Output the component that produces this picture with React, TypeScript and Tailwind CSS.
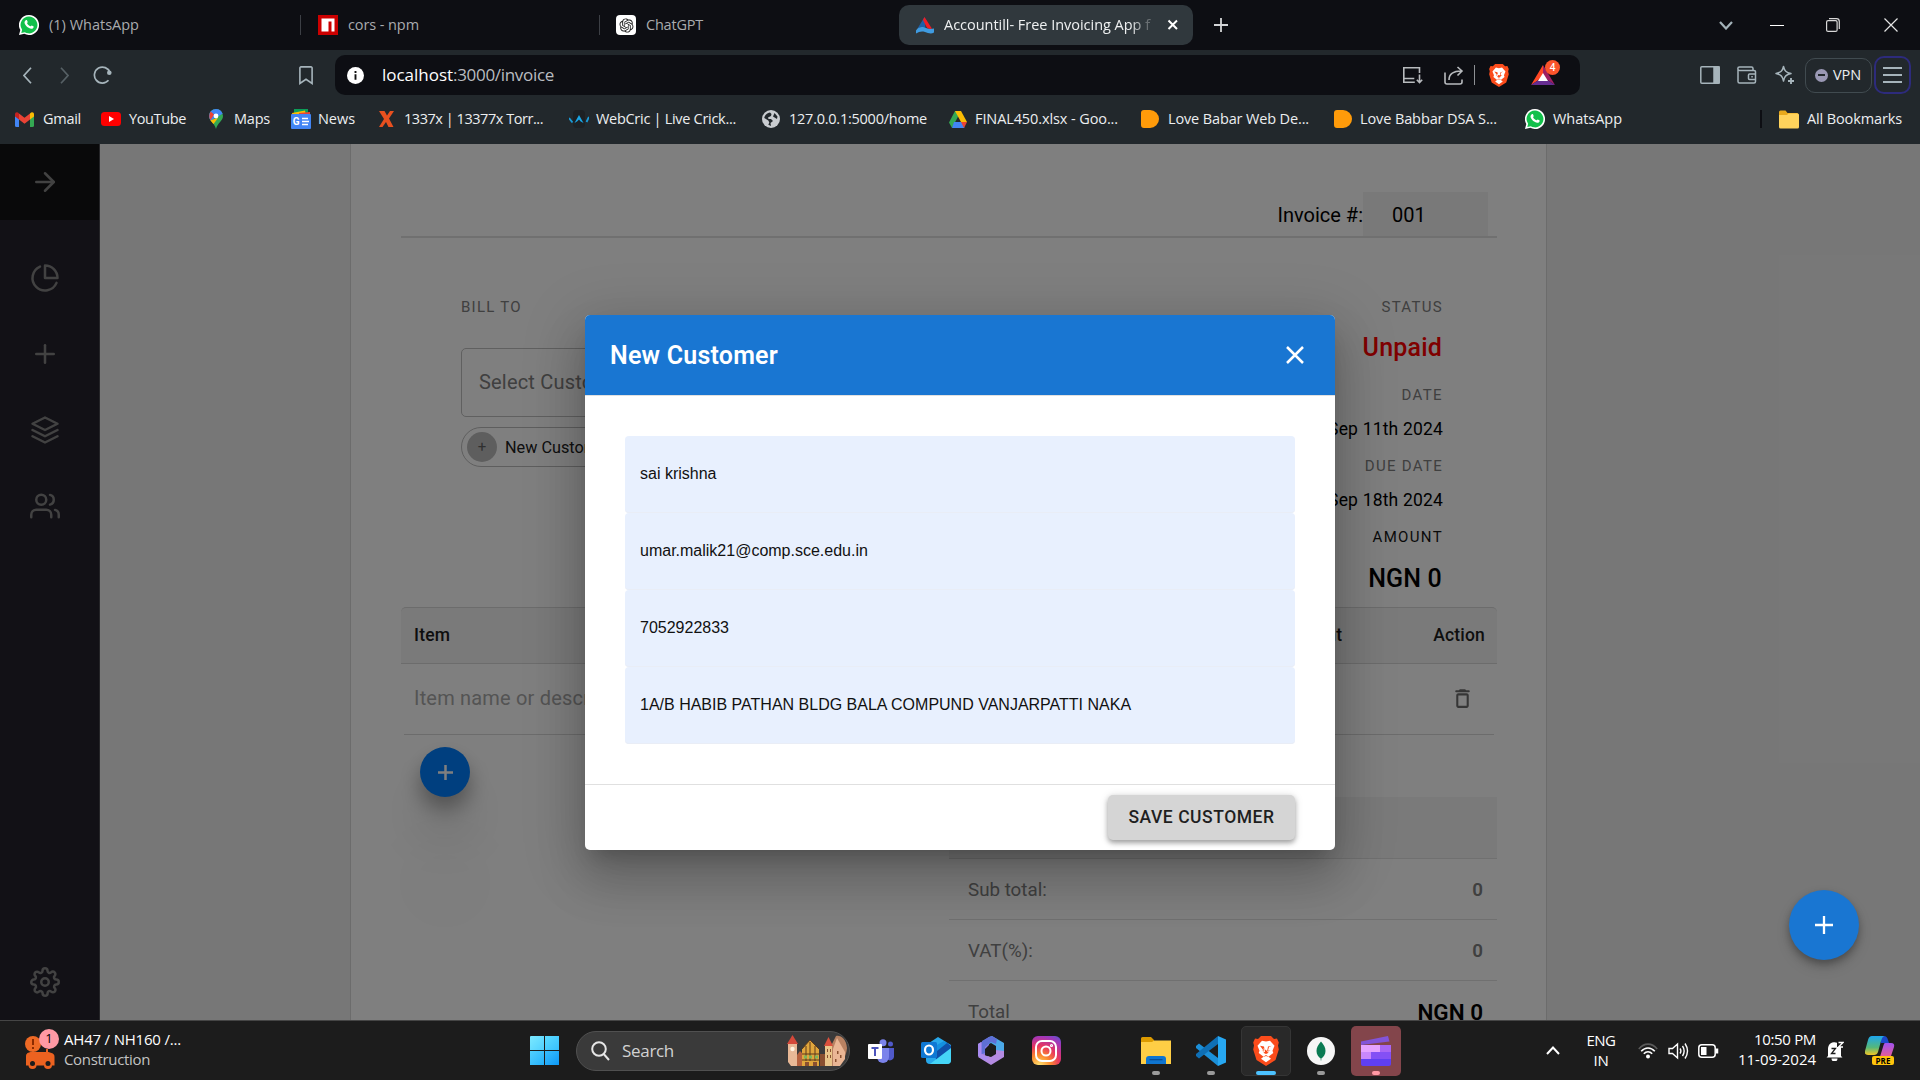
import React, { useLayoutEffect, useRef, useState } from "react";
import { FiArrowRight, FiPieChart, FiPlus, FiLayers, FiUsers, FiSettings } from "react-icons/fi";
import { RiOpenaiFill } from "react-icons/ri";

/** Single-line label whose letter spacing is tuned so that it occupies `w` pixels. */
function Fit({ w, className = "", children }: { w: number; className?: string; children: string }) {
  const ref = useRef<HTMLSpanElement>(null);
  const [spacing, setSpacing] = useState(0);
  useLayoutEffect(() => {
    const el = ref.current;
    if (el) setSpacing((w - el.getBoundingClientRect().width) / children.length);
  }, [w, children]);
  return (
    <span ref={ref} className={"inline-block shrink-0 whitespace-pre " + className} style={{ letterSpacing: spacing + "px" }}>
      {children}
    </span>
  );
}

const ui = "font-['Open_Sans',sans-serif]";

function WhatsApp() {
  return (
    <svg width="20" height="20" viewBox="0 0 20 20" className="shrink-0">
      <path d="M10 0a10 10 0 1 1-4.7 18.8L0 20l1.3-5A10 10 0 0 1 10 0z" fill="#fff" />
      <path d="M10 1.6a8.4 8.4 0 1 1-4.3 15.6L2.3 18l.8-3.2A8.4 8.4 0 0 1 10 1.6z" fill="#12c04b" />
      <path d="M6.8 5.2c.5-.4 1-.3 1.2.1l.7 1.6c.1.4-.7 1-.6 1.3.5 1.2 1.9 2.5 3.3 3 .4.1.9-1 1.3-.8l1.7.8c.5.3.2 1.6-.4 2-1.2.9-2.8.5-4.4-.4-2-1.1-3.4-2.8-4-4.6-.3-1.2.3-2.4 1.2-3z" fill="#fff" />
    </svg>
  );
}

function Npm() {
  return (
    <svg width="20" height="20" viewBox="0 0 20 20" className="shrink-0">
      <path d="M0 0h20v20H0z" fill="#cb0000" />
      <path d="M3.500 3.500h13v13h-3V6.500h-3v10h-7z" fill="#fff" />
    </svg>
  );
}

function Accountill() {
  return (
    <svg width="18" height="17" viewBox="0 0 18 17" className="shrink-0">
      <path d="M8.500 0 1.500 11.500c3-2 6-2 8 0z" fill="#1d5fa8" />
      <path d="M8.500 0 16 11.800c-3 .5-5-.3-6-2.800L7 3z" fill="#ee1c25" />
      <path d="M0 13.500c3-5 8-3.500 10-2.500 3 1.300 5 1.200 8 .5v4c-3 2-6 .500-9-.5-4-1-6 0-9 1.500z" fill="#3f9be0" />
    </svg>
  );
}

function Folder() {
  return (
    <svg width="20" height="19" viewBox="0 0 20 19" className="shrink-0">
      <path d="M0 2a1.500 1.500 0 0 1 1.500-1.500h5l2 2.500H18a1.500 1.500 0 0 1 1.500 1.500V15H0z" fill="#e8a91c" />
      <path d="M0 5h8l1.500-1.500H18.500A1.500 1.500 0 0 1 20 5v12a1.500 1.500 0 0 1-1.500 1.500h-17A1.500 1.500 0 0 1 0 17z" fill="#ffd35c" />
    </svg>
  );
}

function Lion({ size }: { size: number }) {
  return (
    <svg width={(size * 26) / 30} height={size} viewBox="0 0 26 30" className="shrink-0">
      <path d="M8 0h10l3 3 3-.5 1.800 4-.800 3 .800 4-3.300 10.500L13 30 3.500 24 .2 13.500 1 9.500l-.8-3L2 2.500 5 3z" fill="#fb4c1b" />
      <path d="M13 5.500l4-.800 4.500 5-2 5 .800 2.300-3.300 2.500-1.500 1.300 2.500 2-5 3.500-5-3.500 2.500-2L9 19.500 5.700 17l.8-2.300-2-5L9 4.700z" fill="#fff" />
      <path d="M7 9.700l4 .9 1 5.200-1.700.9 2.700 1.300 2.700-1.300-1.700-.9 1-5.200 4-.9-3 1.300-1 3.500 2.500.3-2.700.8M7 9.700l3 1.300 1 3.500-2.500.3 2.700.8M9.500 21.200l3.500-1.300 3.500 1.300-3.500-2.200z" fill="#fb4c1b" />
    </svg>
  );
}

function TabStrip() {
  return (
    <div className={"flex h-[50px] items-center bg-[#0d0e13] pl-[19px] text-[14.5px] text-[#a9abae] " + ui}>
      <div className="flex w-[281px] items-center gap-[10px]">
        <WhatsApp />
        <Fit w={90}>(1) WhatsApp</Fit>
      </div>
      <div className="flex w-[299px] items-center">
        <div className="h-5 w-px bg-[#3c3f45]" />
        <div className="ml-[17px] flex items-center gap-[10px]">
          <Npm />
          <Fit w={71}>cors - npm</Fit>
        </div>
      </div>
      <div className="flex w-[300px] items-center">
        <div className="h-5 w-px bg-[#3c3f45]" />
        <div className="ml-4 flex items-center gap-[10px]">
          <div className="flex size-5 items-center justify-center rounded-[4px] bg-white">
            <RiOpenaiFill size={17} color="#222" />
          </div>
          <Fit w={57}>ChatGPT</Fit>
        </div>
      </div>
      <div className="flex h-10 w-[294px] items-center rounded-[10px] bg-[#30383d] pl-[17px] text-[#eef0f1]">
        <Accountill />
        <div className="ml-[10px] w-[207px] overflow-hidden [mask-image:linear-gradient(to_right,#000_90%,rgba(0,0,0,0.3)_98%)]">
          <Fit w={206}>Accountill- Free Invoicing App f</Fit>
        </div>
        <svg width="12" height="12" viewBox="0 0 12 12" className="ml-[16px]">
          <path d="M1.500 1.500l8.500 8.500M10 1.500L1.500 10" stroke="#fff" strokeWidth="2" />
        </svg>
      </div>
      <svg width="14" height="14" viewBox="0 0 14 14" className="ml-[21px]">
        <path d="M7 0v14M0 7h14" stroke="#d3d5d7" strokeWidth="1.8" />
      </svg>
      <svg width="14" height="9" viewBox="0 0 14 9" className="ml-[491px]">
        <path d="M1 1l6 6.500L13 1" stroke="#a3b2b9" strokeWidth="2.200" fill="none" />
      </svg>
      <div className="ml-[37px] h-px w-[14px] bg-white" />
      <svg width="14" height="14" viewBox="0 0 14 14" className="ml-[42px]" fill="none" stroke="#d8d8d8" strokeWidth="1.200">
        <rect x=".6" y="2.600" width="10.500" height="10.800" rx="1.500" />
        <path d="M3 .6h7.500a2.800 2.800 0 0 1 2.800 2.800V11" />
      </svg>
      <svg width="14" height="14" viewBox="0 0 14 14" className="ml-[44px]">
        <path d="M.5.5l13 13M13.500.5l-13 13" stroke="#e4e4e4" strokeWidth="1.200" />
      </svg>
    </div>
  );
}

function Toolbar() {
  return (
    <div className={"flex h-[50px] items-center bg-[#22282c] pl-[23px] " + ui}>
      <svg width="9" height="17" viewBox="0 0 9 17" fill="none" stroke="#a6b4bb" strokeWidth="1.700">
        <path d="M8 .7L1 8.500 8 16.300" />
      </svg>
      <svg width="9" height="17" viewBox="0 0 9 17" fill="none" stroke="#566065" strokeWidth="1.700" className="ml-7">
        <path d="M1 .7l7 7.800-7 7.800" />
      </svg>
      <svg width="20" height="20" viewBox="0 0 20 20" fill="none" className="ml-6">
        <path d="M15.500 15.300A8 8 0 1 1 17 7.500" stroke="#a6b4bb" strokeWidth="1.700" />
        <circle cx="16.300" cy="7.700" r="2.300" fill="#a6b4bb" />
      </svg>
      <svg width="14" height="19" viewBox="0 0 14 19" fill="none" stroke="#a6b4bb" strokeWidth="1.600" className="ml-[186px]">
        <path d="M2 .9h10a1.100 1.100 0 0 1 1.100 1.100v15.500L7 13.300.9 17.500V2A1.100 1.100 0 0 1 2 .9z" />
      </svg>
      <div className="ml-[22px] flex h-10 w-[1245px] items-center rounded-[10px] bg-[#0d0e13] pl-[12px]">
        <svg width="17" height="17" viewBox="0 0 17 17">
          <circle cx="8.500" cy="8.500" r="8.500" fill="#fff" />
          <path d="M8.500 7.300v5.500M8.500 4v2" stroke="#111" strokeWidth="1.900" />
        </svg>
        <div className="ml-[18px] flex w-[172px] text-[17px] leading-6">
          <Fit w={71} className="text-white">localhost</Fit>
          <Fit w={101} className="text-[#b9bcc0]">:3000/invoice</Fit>
        </div>
        <svg width="21" height="18" viewBox="0 0 21 18" fill="none" stroke="#b8bbbe" strokeWidth="1.600" className="ml-[848px]">
          <path d="M17.500 7V1.800H1.800v14.500h11M1.800 12.500h10.500" />
          <path d="M17.500 8.500v8M14.800 13.800l2.700 2.700 2.700-2.700" />
        </svg>
        <svg width="20" height="19" viewBox="0 0 20 19" fill="none" stroke="#b8bbbe" strokeWidth="1.600" className="ml-[21px]">
          <path d="M1 6.500V16a2 2 0 0 0 2 2h13a2 2 0 0 0 2-2v-2.500" />
          <path d="M5 14c0-6 4-9 12.500-9M13.500 1l4.500 4-4.500 4.500" />
        </svg>
        <div className="ml-[10px] h-5 w-px bg-[#8d9094]" />
        <div className="ml-[14px] flex w-5 justify-center"><Lion size={23} /></div>
        <div className="relative ml-[22px] h-[20px] w-6">
          <svg width="24" height="20" viewBox="0 0 24 20">
            <path d="M12 0L0 20l12-8z" fill="#ff4724" />
            <path d="M12 0l12 20-12-8z" fill="#9e1f63" />
            <path d="M0 20h24l-12-8z" fill="#662d91" />
            <path d="M12 8l5 8H7z" fill="#fff" />
          </svg>
          <div className="absolute -top-[5px] left-[14px] flex size-[15px] items-center justify-center rounded-full bg-[#fb542b] text-[10px] font-semibold text-white">4</div>
        </div>
      </div>
      <svg width="20" height="18" viewBox="0 0 20 18" className="ml-[120px]" fill="none" stroke="#a6b4bb" strokeWidth="1.500">
        <rect x=".8" y=".8" width="18.400" height="16.400" rx="1" />
        <path d="M14 1h5v16h-5z" fill="#a6b4bb" />
      </svg>
      <svg width="20" height="18" viewBox="0 0 20 18" className="ml-[17px]" fill="none" stroke="#a6b4bb" strokeWidth="1.500">
        <path d="M16 4.500V2.500A1.500 1.500 0 0 0 14.500 1H2.500a1.600 1.600 0 0 0 0 3.400H17A1.500 1.500 0 0 1 18.500 6v9.500A1.500 1.500 0 0 1 17 17H2.500A1.500 1.500 0 0 1 1 15.500V2.800" />
        <path d="M18.500 8h-6a1 1 0 0 0-1 1v3.500a1 1 0 0 0 1 1h6M14.300 10.700h1.500" />
      </svg>
      <svg width="20" height="20" viewBox="0 0 20 20" className="ml-[18px]" fill="none" stroke="#a6b4bb" strokeWidth="1.500" strokeLinejoin="round">
        <path d="M8.500 1.500c1 4.500 2.500 6 7.500 7-5 1.200-6.500 2.700-7.500 7.500-1-4.800-2.500-6.300-7.500-7.500 5-1 6.500-2.500 7.500-7z" />
        <path d="M16 13v6M13 16h6" strokeWidth="1.900" />
      </svg>
      <div className="ml-[10px] flex h-[35px] w-[67px] items-center rounded-[10px] border border-[#414b50] pl-[9px] text-[14.500px] text-[#eceef0]">
        <div className="flex size-[13px] items-center justify-center rounded-full bg-[#9a98b4]"><div className="h-[2px] w-[7px] bg-[#22282c]" /></div>
        <Fit w={28} className="ml-[5px]">VPN</Fit>
      </div>
      <div className="ml-[2px] flex h-[38px] w-[37px] flex-col items-center justify-center gap-[5px] rounded-[10px] border-2 border-[#2d2b7c]">
        <div className="h-[2px] w-[19px] bg-[#a6b4bb]" />
        <div className="h-[2px] w-[19px] bg-[#a6b4bb]" />
        <div className="h-[2px] w-[19px] bg-[#a6b4bb]" />
      </div>
    </div>
  );
}

function Bookmark({ slot, gap, w, label, children }: { slot: string; gap: string; w: number; label: string; children: React.ReactNode }) {
  return (
    <div className={"flex shrink-0 items-center " + slot}>
      {children}
      <Fit w={w} className={gap}>{label}</Fit>
    </div>
  );
}

function DIcon() {
  return <div className="h-[18px] w-[18px] shrink-0 rounded-l-[3px] rounded-r-[9px] bg-[#ff9b0a]" />;
}

function Bookmarks() {
  return (
    <div className={"flex h-11 items-center bg-[#22282c] pb-[6px] pl-[15px] pt-0 text-[14.500px] text-[#eceef0] " + ui}>
      <Bookmark slot="w-[86px]" gap="ml-[9px]" w={38} label="Gmail">
        <svg width="19" height="15" viewBox="0 0 19 15" className="shrink-0">
          <path d="M0 2v11.500A1.500 1.500 0 0 0 1.500 15H4V5z" fill="#4285f4" />
          <path d="M19 2v11.500a1.500 1.500 0 0 1-1.500 1.500H15V5z" fill="#34a853" />
          <path d="M15 1.500v6l4-3V2.200C19 .2 16.700-.7 15 1.500z" fill="#fbbc04" />
          <path d="M4 1.500l5.500 4.200L15 1.500v6l-5.500 4.200L4 7.500z" fill="#ea4335" />
          <path d="M0 2.200v2.300l4 3v-6C2.300-.7 0 .2 0 2.200z" fill="#c5221f" />
        </svg>
      </Bookmark>
      <Bookmark slot="w-[108px]" gap="ml-2" w={57} label="YouTube">
        <svg width="20" height="14" viewBox="0 0 20 14" className="shrink-0">
          <rect width="20" height="14" rx="3.500" fill="#f00" />
          <path d="M8 4l5 3-5 3z" fill="#fff" />
        </svg>
      </Bookmark>
      <Bookmark slot="w-[82px]" gap="ml-[11px]" w={36} label="Maps">
        <svg width="14" height="20" viewBox="0 0 14 20" className="shrink-0">
          <path d="M7 0a7 7 0 0 1 7 7c0 5-5.300 6.500-7 13C5.300 13.500 0 12 0 7a7 7 0 0 1 7-7z" fill="#34a853" />
          <path d="M7 0a7 7 0 0 1 6.600 4.700L1.600 11.500A7 7 0 0 1 0 7a7 7 0 0 1 7-7z" fill="#4285f4" />
          <path d="M1.700 2.600L5 5.500 1.500 11.300C0 9 0 5 1.700 2.600z" fill="#ea4335" />
          <path d="M1.500 11.300L9 9l-4.500 6C3.200 13.500 2.200 12.500 1.500 11.300z" fill="#fbbc04" />
          <circle cx="7" cy="7" r="2.400" fill="#fff" />
        </svg>
      </Bookmark>
      <Bookmark slot="w-[88px]" gap="ml-[7px]" w={37} label="News">
        <svg width="20" height="20" viewBox="0 0 20 20" className="shrink-0">
          <path d="M3 0h14v8H3z" fill="#0c9d58" />
          <path d="M1 4l13-2.500 1 5L2 9z" fill="#fbbc04" />
          <path d="M8 4l11-1v6H8z" fill="#ea4335" />
          <rect y="5" width="20" height="15" rx="1" fill="#4285f4" />
          <text x="1.800" y="16" fontSize="10" fontWeight="700" fill="#fff" fontFamily="Roboto, sans-serif">G</text>
          <path d="M11 9.500h6M11 12.500h7M11 15.500h6" stroke="#fff" strokeWidth="1.500" />
        </svg>
      </Bookmark>
      <Bookmark slot="w-[190px]" gap="ml-[10px]" w={139} label="1337x | 13377x Torr...">
        <svg width="15" height="16" viewBox="0 0 15 16" className="shrink-0">
          <path d="M0 0h5.500l2.500 4.500L11 0h4l-5 7.500L14.500 16H9.500L7 11l-3.500 5H0l5-8z" fill="#e8501f" />
        </svg>
      </Bookmark>
      <Bookmark slot="w-[193px]" gap="ml-[7px]" w={140} label="WebCric | Live Crick...">
        <svg width="20" height="18" viewBox="0 0 20 18" className="shrink-0">
          <rect x="4" width="12" height="18" rx="4" fill="#1d2023" />
          <path d="M0 8l3.500 4.500M20 7l-2.500 5" stroke="#1a9ad6" strokeWidth="1.900" fill="none" />
          <path d="M5.500 13L10 5l4.500 8-2.800-1.500L10 9.500 8 11.500z" fill="#1aa5e5" />
        </svg>
      </Bookmark>
      <Bookmark slot="w-[187px]" gap="ml-[9px]" w={138} label="127.0.0.1:5000/home">
        <svg width="18" height="18" viewBox="0 0 18 18" className="shrink-0">
          <circle cx="9" cy="9" r="9" fill="#c9ccd0" />
          <path d="M8 2.500c-3 .5-5.500 3-5.700 5.500l4 2.500 1 2-1 2.200L9 16l-.500-3 2.500-2-2-2H6.500L6 7.500l3-1.500.5-2zM12.500 3l-1.500 3.500 4 2.500.500-2.500z" fill="#22282c" />
        </svg>
      </Bookmark>
      <Bookmark slot="w-[192px]" gap="ml-2" w={143} label="FINAL450.xlsx - Goo...">
        <svg width="18" height="17" viewBox="0 0 18 17" className="shrink-0">
          <path d="M6 0h6L3 17 0 11.500z" fill="#34a853" />
          <path d="M6 0h6l6 11h-6z" fill="#fbbc04" />
          <path d="M5 11h8l2.500 6H3z" fill="#4285f4" />
          <path d="M12 11h6l-3 6z" fill="#ea4335" />
        </svg>
      </Bookmark>
      <Bookmark slot="w-[193px]" gap="ml-[9px]" w={141} label="Love Babar Web De..."><DIcon /></Bookmark>
      <Bookmark slot="w-[191px]" gap="ml-[8px]" w={137} label="Love Babbar DSA S..."><DIcon /></Bookmark>
      <Bookmark slot="w-[235px]" gap="ml-[8px]" w={69} label="WhatsApp"><WhatsApp /></Bookmark>
      <div className="h-[18px] w-[2px] bg-[#0d0e13]" />
      <div className="ml-[17px] flex items-center gap-2">
        <Folder />
        <Fit w={95}>All Bookmarks</Fit>
      </div>
    </div>
  );
}

function Sidebar() {
  return (
    <aside className="flex w-[100px] shrink-0 flex-col border-r border-[#4a4a50] bg-[#24222c] text-[#848484]">
      <div className="flex h-[76px] items-center bg-[#131315] pl-[30px]"><FiArrowRight size={30} /></div>
      <div className="flex flex-col gap-[46px] pl-[30px] pt-[43px]">
        <FiPieChart size={30} />
        <FiPlus size={30} />
        <FiLayers size={30} />
        <FiUsers size={30} />
      </div>
      <div className="mt-auto pb-[23px] pl-[30px]"><FiSettings size={30} /></div>
    </aside>
  );
}

function SummaryRow({ label, children }: { label: string; children: React.ReactNode }) {
  return (
    <div className="flex h-[61px] items-center justify-between border-b border-[#e0e0e0] pl-[19px] pr-[14px] pt-px text-[18.750px] leading-6 text-[#808080]">
      <span>{label}</span>
      {children}
    </div>
  );
}

function Invoice() {
  return (
    <section className="ml-[250px] h-[876px] w-[1197px] shrink-0 border-x border-[#d8d8d8] bg-white pl-[50px] pr-[49px] text-black">
      <div className="flex h-[94px] items-end justify-end border-b-2 border-[#e0e0e0] pr-[9px]">
        <div className="flex h-11 items-center text-[20px]">
          <span className="pt-[2px]">Invoice #:</span>
          <div className="flex h-11 w-[125px] items-center bg-[#f3f3f3] pl-[29px] pt-[2px]">001</div>
        </div>
      </div>
      <div className="flex h-[369px] justify-between pl-[60px] pr-[54px]">
        <div className="pt-[59px]">
          <div className="text-[15px] leading-5 tracking-[1.250px] text-[#808080]">BILL TO</div>
          <div className="mt-[31px] flex h-[69px] w-[330px] items-center rounded-[5px] border border-[#c0c0c0] pb-[2px] pl-[17px] text-[20px] tracking-[0.190px] text-[#808080]">Select Customer</div>
          <div className="mt-[10px] flex h-10 w-[170px] items-center rounded-full border border-[#bdbdbd] pl-[5px] text-[16.250px] text-[#212121]">
            <span className="flex size-[30px] items-center justify-center rounded-full bg-[#bdbdbd] text-[15px] text-[#616161]">+</span>
            <span className="ml-2 pt-[2px]">New Customer</span>
          </div>
        </div>
        <div className="flex flex-col items-end pt-[59px] text-[17.500px] leading-5">
          <div className="text-[15px] tracking-[1.300px] text-[#808080]">STATUS</div>
          <div className="mt-[16px] pr-px text-[25px] font-medium leading-[30px] tracking-[0.190px] text-[#ff0000]">Unpaid</div>
          <div className="mt-[22px] text-[15px] tracking-[1.400px] text-[#808080]">DATE</div>
          <div className="mt-[14px] tracking-[0.180px]">Sep 11th 2024</div>
          <div className="mt-[17px] text-[15px] tracking-[1.300px] text-[#808080]">DUE DATE</div>
          <div className="mt-[14px] tracking-[0.180px]">Sep 18th 2024</div>
          <div className="mt-[17px] text-[15px] tracking-[1.350px] text-[#141414]">AMOUNT</div>
          <div className="mt-[17px] pr-px text-[25px] font-medium leading-[30px] tracking-[0.190px]">NGN 0</div>
        </div>
      </div>
      <div className="flex h-[57px] items-center justify-between rounded-t-[5px] border-y border-[#d8d8d8] bg-[#f4f4f4] pl-[13px] pr-[12px] text-[17.500px] font-medium tracking-[0.180px] text-[#1c1c1c]">
        <span>Item</span>
        <div className="flex gap-[91px]"><span>Amount</span><span>Action</span></div>
      </div>
      <div className="mx-[3px] flex h-[71px] items-center justify-between border-b border-[#d8d8d8] pb-[2px] pl-[10px] pr-[19px] text-[20px] tracking-[0.190px] text-[#a8a8a8]">
        <span>Item name or description</span>
        <svg width="25" height="25" viewBox="0 0 24 24" fill="#6c6c6c">
          <path d="M6 19c0 1.100.9 2 2 2h8c1.100 0 2-.9 2-2V9c0-1.100-.9-2-2-2H8c-1.100 0-2 .9-2 2v10zM8 9h8v10H8V9zM15.500 4l-.7-.7c-.2-.2-.4-.3-.7-.3H9.900c-.3 0-.5.1-.7.3L8.500 4H6a1 1 0 0 0 0 2h12a1 1 0 0 0 0-2z" fillRule="evenodd" />
        </svg>
      </div>
      <div className="flex h-[62px] items-start pl-[19px] pt-3">
        <div className="flex size-[50px] shrink-0 items-center justify-center rounded-full bg-[#007fff] shadow-[0_12px_20px_rgba(0,0,0,0.320),0_40px_50px_rgba(0,0,0,0.120),0_110px_75px_rgba(0,0,0,0.070)]">
          <svg width="15" height="15" viewBox="0 0 15 15"><path d="M7.500 0v15M0 7.500h15" stroke="#fff" strokeWidth="2.500" /></svg>
        </div>
      </div>
      <div className="ml-[548px]">
        <div className="h-[62px] border-b border-[#e0e0e0] bg-[#f4f4f4]" />
        <SummaryRow label="Sub total:"><span className="font-semibold">0</span></SummaryRow>
        <SummaryRow label="VAT(%):"><span className="font-semibold">0</span></SummaryRow>
        <SummaryRow label="Total"><span className="text-[22.500px] font-semibold text-black">NGN 0</span></SummaryRow>
      </div>
    </section>
  );
}

function Field({ children }: { children: string }) {
  return <div className="flex h-[77px] items-center rounded-[4px] bg-[#e8f0fe] pl-[15px] pb-[2px] shadow-[inset_0_-1px_0_#e9edf6]">{children}</div>;
}

function CustomerDialog() {
  return (
    <div className="h-[535px] w-[750px] overflow-hidden rounded-[5px] bg-white">
      <div className="flex h-20 items-center justify-between bg-[#1976d2] pl-[25px] pr-[31px] text-white">
        <Fit w={168} className="pt-[2px] text-[25px] font-semibold">New Customer</Fit>
        <svg width="18" height="18" viewBox="0 0 18 18"><path d="M1 1l16 16M17 1L1 17" stroke="#fff" strokeWidth="2.500" /></svg>
      </div>
      <div className="h-[390px] border-y border-[#e0e0e0] px-10 pt-10 font-['Liberation_Sans',Arial,sans-serif] text-[16px] text-[#111]">
        <Field>sai krishna</Field>
        <Field>umar.malik21@comp.sce.edu.in</Field>
        <Field>7052922833</Field>
        <Field>1A/B HABIB PATHAN BLDG BALA COMPUND VANJARPATTI NAKA</Field>
      </div>
      <div className="flex justify-end pr-10 pt-[10px]">
        <div className="flex h-[45px] w-[187px] items-center justify-center rounded-[5px] bg-[#d5d5d5] pb-px shadow-[0_3px_5px_rgba(0,0,0,0.300),0_1px_8px_rgba(0,0,0,0.150)]">
          <Fit w={146} className="text-[17.500px] font-medium text-[#1f1f1f]">SAVE CUSTOMER</Fit>
        </div>
      </div>
    </div>
  );
}

function Page() {
  return (
    <div className="relative h-[876px] overflow-hidden bg-[#efefef] font-['Roboto',sans-serif]">
      <div className="flex h-full">
        <Sidebar />
        <Invoice />
      </div>
      <div className="absolute inset-0 bg-black/50" />
      <div className="absolute left-[585px] top-[171px] rounded-[5px] shadow-[0_14px_19px_-9px_rgba(0,0,0,0.200),0_30px_48px_4px_rgba(0,0,0,0.140),0_11px_58px_10px_rgba(0,0,0,0.140)]">
        <CustomerDialog />
      </div>
      <div className="absolute left-[1789px] top-[746px] flex size-[70px] items-center justify-center rounded-full bg-[#1976d2] shadow-[0_4px_7px_rgba(0,0,0,0.250),0_7px_14px_rgba(0,0,0,0.150)]">
        <svg width="18" height="18" viewBox="0 0 18 18"><path d="M9 0v18M0 9h18" stroke="#fff" strokeWidth="2.300" /></svg>
      </div>
    </div>
  );
}

function TaskIcon({ className, dot, children }: { className: string; dot?: string; children: React.ReactNode }) {
  return (
    <div className={"relative flex h-[50px] w-[50px] shrink-0 items-center justify-center rounded-[5px] " + className}>
      {children}
      {dot ? <div className={"absolute h-1 rounded-full " + dot} /> : null}
    </div>
  );
}

function Town() {
  return (
    <svg width="60" height="31" viewBox="0 0 60 31" className="shrink-0">
      <path d="M45 31V9L49 1c5-1 10 3 11 12-1 8-4 14-9 18z" fill="#b98262" />
      <path d="M46 31V14l4-11 8 14v7l-5 7z" fill="#eab695" />
      <path d="M1 8h9v23H4l-3-4z" fill="#e8b896" />
      <path d="M0 9l5.500-9L11 9z" fill="#d4483a" />
      <circle cx="5.500" cy="14" r="2.200" fill="#fff3e0" />
      <path d="M10 20l3-4 4 4v11h-7z" fill="#b5613e" />
      <path d="M15 14l8-9 9 9v17H15z" fill="#e0a63c" />
      <path d="M15 14l8-9 9 9M15 19h18M15 25h18M19 11v15M23 7v19M28 11v15" stroke="#5d3a1c" strokeWidth="1" fill="none" />
      <path d="M17 20.500h3v3h-3zm5 0h3v3h-3zm6 0h3v3h-3z" fill="#7fb55b" />
      <path d="M38 11h7v20h-7z" fill="#e9c58a" />
      <path d="M37 11l4.500-9L46 11z" fill="#d9503d" />
      <path d="M33 19h5v12h-5zM18 27h4v4h-4zm8 0h4v4h-4zM40 14h1v3h-1zm3 0h1v3h-1zm-3 6h1v3h-1zm3 0h1v3h-1zM50 16h1.500v3H50zm3 4h1.500v3H53zm-5 4h1.500v3H48z" fill="#8a5030" />
    </svg>
  );
}

function Taskbar() {
  return (
    <footer className={"flex h-[60px] items-center border-t border-[#454545] bg-[#1c1c1c] text-white " + ui}>
      <div className="relative ml-[25px] h-[46px] w-[34px]">
        <svg width="34" height="42" viewBox="0 0 34 42">
          <path d="M2.500 25l3-1h18l3 1a4 4 0 0 1 3 4v8.500H1V29a4 4 0 0 1 1.500-4z" fill="#ec6220" />
          <path d="M22 24v-3" stroke="#ec6220" strokeWidth="2" />
          <circle cx="7.500" cy="37" r="4" fill="#ec6220" /><circle cx="23" cy="37" r="4" fill="#ec6220" />
          <circle cx="7.500" cy="35.500" r="2.500" fill="#1c1c1c" /><circle cx="23" cy="35.500" r="2.500" fill="#1c1c1c" />
          <circle cx="8" cy="16" r="8" fill="#ee6a25" />
          <path d="M8 11v6M8 19v2" stroke="#8c2b00" strokeWidth="2" />
        </svg>
        <div className="absolute left-[14px] top-[1px] flex size-5 items-center justify-center rounded-full bg-[#ff99a4] text-[13px] text-black">1</div>
      </div>
      <div className="ml-[5px] w-[466px] pb-[4px] text-[15px] leading-5">
        <div><Fit w={117}>AH47 / NH160 /...</Fit></div>
        <div className="text-[#c3c3c3]"><Fit w={86}>Construction</Fit></div>
      </div>
      <div className="grid size-[29px] shrink-0 grid-cols-2 gap-px">
        <div className="rounded-tl-[1px] bg-linear-to-br from-[#7be9ff] to-[#4fd0ff]" />
        <div className="bg-linear-to-br from-[#5cdcff] to-[#35bfff]" />
        <div className="bg-linear-to-br from-[#50d0ff] to-[#23b1fb]" />
        <div className="bg-linear-to-br from-[#37bfff] to-[#0a98f5]" />
      </div>
      <div className="ml-[17px] flex h-10 w-[274px] shrink-0 items-center rounded-full border border-[#505050] bg-[#3a3a3a] pl-[14px]">
        <svg width="19" height="20" viewBox="0 0 19 20" fill="none" stroke="#e6e6e6" strokeWidth="2">
          <circle cx="8" cy="8" r="6.800" /><path d="M12.700 13l5.300 6" />
        </svg>
        <Fit w={52} className="ml-[12px] text-[17px] text-[#d2d2d2]">Search</Fit>
        <div className="ml-[113px]"><Town /></div>
      </div>
      <TaskIcon className="ml-[6px]">
        <svg width="26" height="24" viewBox="0 0 26 24">
          <circle cx="15" cy="3.800" r="3.500" fill="#7b83eb" /><circle cx="22.500" cy="5" r="2.500" fill="#5059c9" />
          <path d="M19 9h7v8a4 4 0 0 1-7 3z" fill="#5059c9" />
          <path d="M9 9h12v9a6 6 0 0 1-12 0z" fill="#7b83eb" />
          <rect y="5" width="14" height="15" rx="1" fill="#fff" />
          <path d="M3.500 9h7M7 9v8" stroke="#4b53bc" strokeWidth="2" />
        </svg>
      </TaskIcon>
      <TaskIcon className="ml-[5px]">
        <svg width="30" height="27" viewBox="0 0 30 27">
          <path d="M5 8L17 0l13 8v15a4 4 0 0 1-4 4H9a4 4 0 0 1-4-4z" fill="#28a8ea" />
          <path d="M12 13L25 5l5 4v4L16 25z" fill="#0f4fa8" />
          <path d="M30 11v12a4 4 0 0 1-4 4H9z" fill="#45d5f7" />
          <path d="M14 9l9-5 3 2-10 8z" fill="#1490df" />
          <rect y="5" width="16" height="16" rx="1.500" fill="#0f78d4" />
          <ellipse cx="8" cy="13" rx="4" ry="4.500" fill="none" stroke="#fff" strokeWidth="2.200" />
        </svg>
      </TaskIcon>
      <TaskIcon className="ml-[5px]">
        <svg width="26" height="29" viewBox="0 0 26 29">
          <path d="M2 7l9-6v8L7 13v9l-5 0-2-2V8z" fill="#8a7be8" />
          <path d="M11 1l3-1 12 7v12l-8-5v-4l-5-3-4 2z" fill="#4ba9e8" />
          <path d="M11 1l3-1 5 3-1 5-5-2-6 5v6l-3 1V5z" fill="#5f6fd6" />
          <path d="M26 15v6l-13 8-13-8 4-3 5 2 4 1 5-3v-4z" fill="#b48be2" />
          <path d="M0 20V8l3-2v12l5 3 3-1-3 5z" fill="#a98cf0" />
        </svg>
      </TaskIcon>
      <TaskIcon className="ml-[5px]">
        <div className="flex size-[29px] items-center justify-center rounded-[6px] bg-[radial-gradient(circle_at_25%_105%,#ffdc6b_5%,#fb8b2e_30%,#e8355f_55%,#a336b8_80%,#4f5bd5_100%)]">
          <svg width="22" height="22" viewBox="0 0 22 22" fill="none" stroke="#fff" strokeWidth="2">
            <rect x="1" y="1" width="20" height="20" rx="6" /><circle cx="11" cy="11" r="4.500" /><circle cx="16.500" cy="5.500" r=".6" />
          </svg>
        </div>
      </TaskIcon>
      <TaskIcon className="ml-[60px]" dot="bottom-[1px] w-2 bg-[#9a9a9a]">
        <svg width="30" height="27" viewBox="0 0 30 27">
          <path d="M0 1.500A1.500 1.500 0 0 1 1.500 0H10l3 3v6H0z" fill="#dd9b00" />
          <path d="M0 5h11l2-1.500h17V27H0z" fill="#ffce45" />
          <path d="M5 27v-5a3 3 0 0 1 3-3h14a3 3 0 0 1 3 3v5z" fill="#0f75d0" />
          <path d="M8.500 22.700h13" stroke="#0a4a91" strokeWidth="1.200" />
        </svg>
      </TaskIcon>
      <TaskIcon className="ml-[5px]" dot="bottom-[1px] w-2 bg-[#9a9a9a]">
        <svg width="30" height="30" viewBox="0 0 30 30">
          <path d="M22 22L3 7.500 0 10v2l22 18z" fill="#1b8fd8" />
          <path d="M22 8L3 22.500 0 20v-2L22 0z" fill="#0f6fb5" />
          <path d="M22 0l8 3.500v23L22 30z" fill="#27a8f2" />
        </svg>
      </TaskIcon>
      <TaskIcon className="ml-[5px] border border-[#353535] bg-[#292929]" dot="bottom-0 w-5 bg-[#4cc2ff]">
        <Lion size={30} />
      </TaskIcon>
      <TaskIcon className="ml-[5px]" dot="bottom-[1px] w-2 bg-[#9a9a9a]">
        <svg width="28" height="28" viewBox="0 0 28 28">
          <circle cx="14" cy="14" r="14" fill="#f6f6f6" />
          <path d="M14 4.500c3 3.500 4.500 6 4.500 9.500s-2 6-4.200 7.500v2h-.6v-2C11.500 20 9.500 17.500 9.500 14S11 8 14 4.500z" fill="#0a7a52" />
        </svg>
      </TaskIcon>
      <TaskIcon className="ml-[5px] bg-[#83454b]" dot="bottom-[1px] w-2 bg-[#ff99a4]">
        <svg width="30" height="30" viewBox="0 0 30 30">
          <path d="M0 5.500L27 0l1.500 5.500L0 9z" fill="#8254d8" />
          <path d="M0 9h30v7H0z" fill="#a866f5" /><path d="M0 9h19v7H0z" fill="#e5a3ff" />
          <path d="M0 16h30v7H0z" fill="#8450f5" /><path d="M0 16h10v7H0z" fill="#c987fb" />
          <path d="M0 23h30v5a2 2 0 0 1-2 2H2a2 2 0 0 1-2-2z" fill="#5f3ff2" />
        </svg>
      </TaskIcon>
      <svg width="14" height="9" viewBox="0 0 14 9" className="ml-[145px] shrink-0" fill="none" stroke="#fff" strokeWidth="2"><path d="M1 8l6-6.500L13 8" /></svg>
      <div className="ml-[26px] w-[30px] pb-[2px] text-center text-[15px] leading-5"><Fit w={29}>ENG</Fit><br /><Fit w={15}>IN</Fit></div>
      <svg width="20" height="16" viewBox="0 0 20 16" className="ml-[22px] shrink-0" fill="none" stroke="#fff" strokeWidth="1.600">
        <path d="M.8 6C6-.5 14-.5 19.200 6" stroke="#5a5a5a" />
        <path d="M3.200 8.300c4-4.500 9.600-4.500 13.600 0M5.800 10.800c2.500-2.800 5.900-2.800 8.400 0" /><circle cx="10" cy="13.500" r="2" fill="#fff" stroke="none" />
      </svg>
      <svg width="21" height="18" viewBox="0 0 21 18" className="ml-[10px] shrink-0" fill="none" stroke="#fff" strokeWidth="1.400">
        <path d="M1 6.500h3.500L9.500 2v14l-5-4.500H1zM12 6.500q1.800 2.500 0 5M14.500 4q3.300 5 0 10M17 1.500q5 7.500 0 15" />
      </svg>
      <svg width="21" height="14" viewBox="0 0 21 14" className="ml-[9px] shrink-0" fill="none" stroke="#fff" strokeWidth="1.500">
        <rect x=".8" y=".8" width="16.400" height="12.400" rx="3" /><rect x="3" y="3" width="5.500" height="8" fill="#fff" stroke="none" /><path d="M19 4.500v5" strokeWidth="2.500" />
      </svg>
      <div className="ml-[18px] w-[79px] shrink-0 pb-[4px] text-right text-[15px] leading-5"><Fit w={62}>10:50 PM</Fit><br /><Fit w={78}>11-09-2024</Fit></div>
      <svg width="18" height="20" viewBox="0 0 18 20" className="ml-[10px] shrink-0">
        <path d="M2 15V8a6.500 6.500 0 0 1 9-6.300V6h4v9l1.500 1.500H.5z" fill="#fff" /><path d="M5.500 17.500h6a3 3 0 0 1-6 0z" fill="#fff" />
        <path d="M5.500 7.500h4l-4 5h4" stroke="#1c1c1c" strokeWidth="1.300" fill="none" /><path d="M12.500 1.500H17l-4.500 4.500H17" stroke="#fff" strokeWidth="1.400" fill="none" />
      </svg>
      <div className="relative ml-[21px] h-[29px] w-[30px] shrink-0">
        <svg width="30" height="24" viewBox="0 0 30 24">
          <defs>
            <linearGradient id="cpl" x1="0" y1="0" x2="0" y2="1"><stop offset="0" stopColor="#1ea7ee" /><stop offset=".6" stopColor="#55b87a" /><stop offset="1" stopColor="#f3c625" /></linearGradient>
            <linearGradient id="cpr" x1="0" y1="0" x2="0" y2="1"><stop offset="0" stopColor="#a052f0" /><stop offset="1" stopColor="#f7607e" /></linearGradient>
          </defs>
          <path d="M15 0h4q3 0 4 4l1 3h-8z" fill="#1b48c8" />
          <path d="M7 0h12q-2 1-3 5l-3 11q-1 3-4 3H3q-4 0-3-4L3 4q1-4 4-4z" fill="url(#cpl)" />
          <path d="M20 7h6q4 0 3 4l-3 9q-1 4-5 4h-7l4-13q1-4 2-4z" fill="url(#cpr)" />
        </svg>
        <div className="absolute bottom-0 left-[7px] flex h-[9px] w-[22px] items-center justify-center rounded-[2px] bg-[#ffc40c] text-[8px] font-bold leading-none text-black">PRE</div>
      </div>
    </footer>
  );
}

export default function App() {
  return (
    <div className="h-[1080px] w-[1920px] overflow-hidden bg-[#22282c]">
      <TabStrip />
      <Toolbar />
      <Bookmarks />
      <Page />
      <Taskbar />
    </div>
  );
}
